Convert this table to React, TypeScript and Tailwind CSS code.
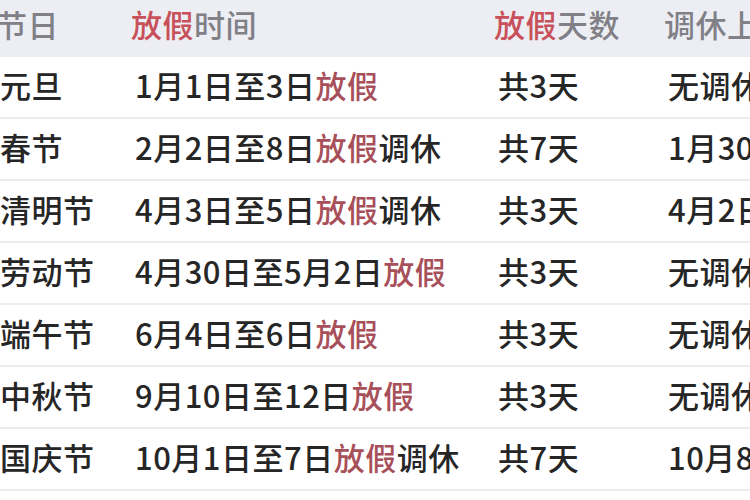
import React from 'react';

const rows = [
    { name: '元旦', time: ['1月1日至3日', '放假', ''], days: '共3天', work: '无调休' },
    { name: '春节', time: ['2月2日至8日', '放假', '调休'], days: '共7天', work: '1月30日、2月12日上班' },
    { name: '清明节', time: ['4月3日至5日', '放假', '调休'], days: '共3天', work: '4月2日上班' },
    { name: '劳动节', time: ['4月30日至5月2日', '放假', ''], days: '共3天', work: '无调休' },
    { name: '端午节', time: ['6月4日至6日', '放假', ''], days: '共3天', work: '无调休' },
    { name: '中秋节', time: ['9月10日至12日', '放假', ''], days: '共3天', work: '无调休' },
    { name: '国庆节', time: ['10月1日至7日', '放假', '调休'], days: '共7天', work: '10月8日、9日上班' },
];

export default function App() {
    return (
        <div
            className="w-[750px] h-[500px] overflow-hidden bg-white text-[31px] leading-none tracking-[0.5px] font-medium"
            style={{ fontFamily: '"Noto Sans CJK SC", "Noto Sans", sans-serif' }}
        >
            <div className="flex items-center h-[57px] bg-[#eceef3] text-[#808086] whitespace-nowrap">
                <div className="w-[135px] shrink-0 -ml-[4px] pb-[10px]">节日</div>
                <div className="w-[363px] shrink-0 pb-[10px]">
                    <span className="text-[#c8505a]">放假</span>时间
                </div>
                <div className="w-[170px] shrink-0 pb-[10px]">
                    <span className="text-[#c8505a]">放假</span>天数
                </div>
                <div className="shrink-0 pb-[10px]">调休上班日期</div>
            </div>

            {rows.map((r, i) => (
                <div
                    key={i}
                    className="flex items-center h-[62px] border-b-2 border-[#ececec] text-[#262626] whitespace-nowrap"
                >
                    <div className="w-[135px] shrink-0 pb-[5px]">{r.name}</div>
                    <div className="w-[363px] shrink-0 pb-[5px]">
                        {r.time[0]}
                        <span className="text-[#a8505a]">{r.time[1]}</span>
                        {r.time[2]}
                    </div>
                    <div className="w-[170px] shrink-0 pb-[5px]">{r.days}</div>
                    <div className="shrink-0 pb-[5px]">{r.work}</div>
                </div>
            ))}
        </div>
    );
}
